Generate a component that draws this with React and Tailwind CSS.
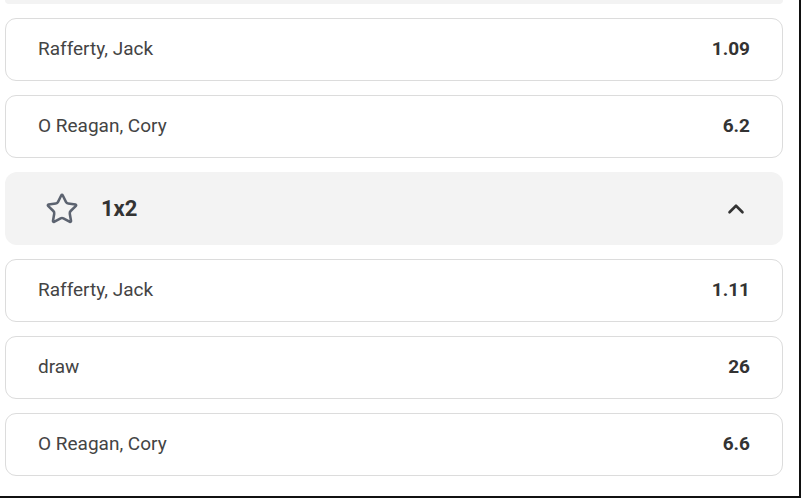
import { ChevronUp, Star } from "lucide-react";

const firstMarket = [
  { name: "Rafferty, Jack", odds: "1.09" },
  { name: "O Reagan, Cory", odds: "6.2" },
];

const secondMarket = [
  { name: "Rafferty, Jack", odds: "1.11" },
  { name: "draw", odds: "26" },
  { name: "O Reagan, Cory", odds: "6.6" },
];

function OddsRow({ name, odds }) {
  return (
    <div className="flex h-[63px] items-center justify-between rounded-[11px] border-[1.5px] border-[#dcdcdc] bg-white pl-[32px] pr-[32px]">
      <span className="text-[19px] text-[#444]">{name}</span>
      <span className="text-[19px] font-bold text-[#333]">{odds}</span>
    </div>
  );
}

function MarketHeader({ title }) {
  return (
    <div className="flex h-[73px] items-center rounded-[12px] bg-[#f3f3f3] pl-[40px] pr-[34px]">
      <Star className="h-[34px] w-[34px] text-[#5c6370]" strokeWidth={1.8} />
      <span className="ml-[22px] text-[22px] font-bold text-[#333]">{title}</span>
      <ChevronUp className="ml-auto h-[26px] w-[26px] text-[#333]" strokeWidth={2.4} />
    </div>
  );
}

export default function App() {
  return (
    <div
      className="h-[498px] w-[801px] overflow-hidden border-b-2 border-r-2 border-[#111] bg-white"
      style={{ fontFamily: "Roboto, 'Liberation Sans', sans-serif" }}
    >
      <div className="flex w-[783px] flex-col gap-[14px] pl-[5px]">
        <div className="h-[4px] rounded-b-[12px] bg-[#f3f3f3]" />
        {firstMarket.map((row) => (
          <OddsRow key={row.name} {...row} />
        ))}
        <MarketHeader title="1x2" />
        {secondMarket.map((row) => (
          <OddsRow key={row.name} {...row} />
        ))}
      </div>
    </div>
  );
}
